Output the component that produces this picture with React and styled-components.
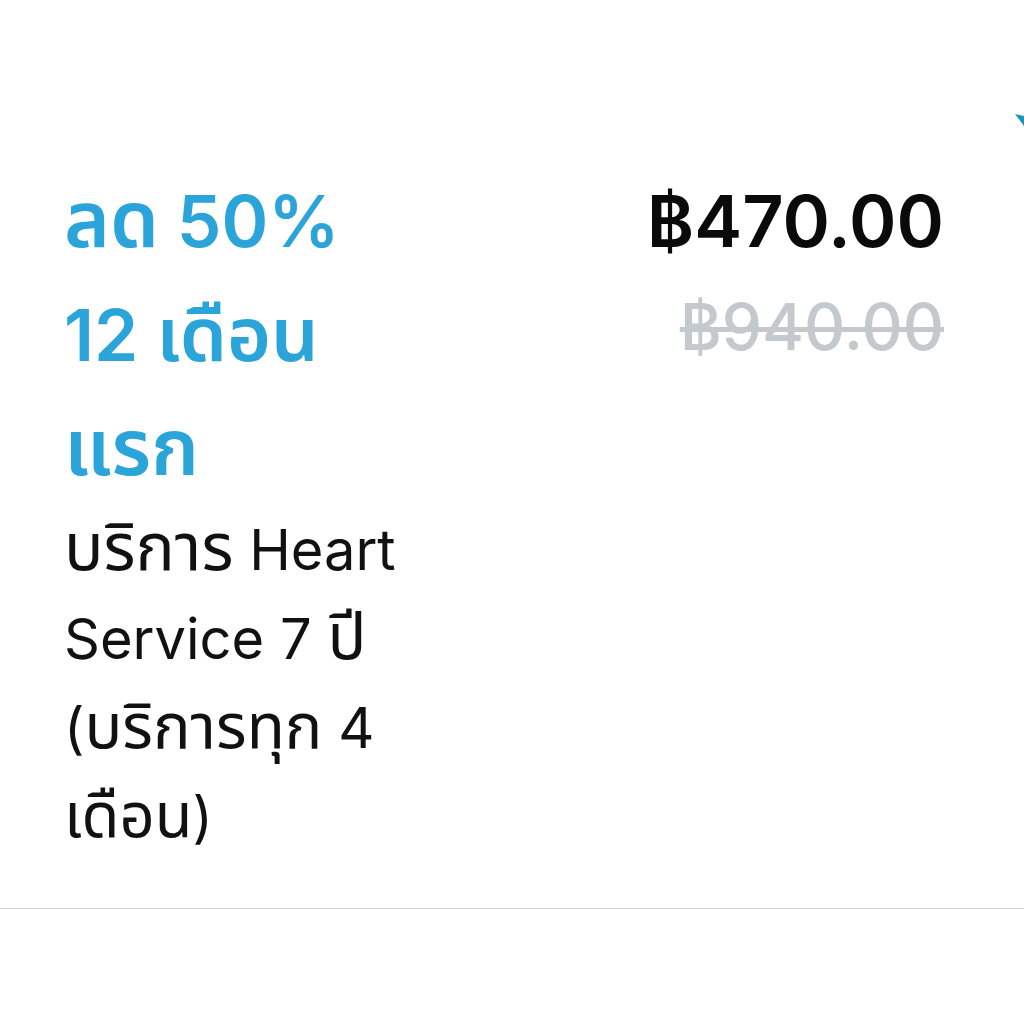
import styled, { createGlobalStyle } from "styled-components";

const GlobalStyle = createGlobalStyle`
  html, body {
    margin: 0;
    padding: 0;
    background: #ffffff;
  }
  body {
    font-family: "Inter", "Noto Sans Thai", "Noto Sans", sans-serif;
  }
`;

const Page = styled.div`
  position: relative;
  width: 1024px;
  height: 1024px;
  overflow: hidden;
  background: #fff;
`;

const Card = styled.div`
  display: flex;
  justify-content: space-between;
  align-items: flex-start;
  padding: 164px 80px 46px 64px;
  border-bottom: 1px solid #cfcfcf;
`;

const Info = styled.div`
  display: flex;
  flex-direction: column;
`;

const Title = styled.div`
  color: #2aa4d9;
  font-size: 71px;
  font-weight: 600;
  line-height: 114px;
  white-space: nowrap;
`;

const Desc = styled.div`
  color: #111;
  font-size: 56px;
  font-weight: 400;
  line-height: 89px;
  white-space: nowrap;
`;

/* the Thai fallback face draws smaller than the reference one */
const Th = styled.span`
  font-size: ${(p) => p.$scale || 1.1}em;
  line-height: 0;
`;

const Prices = styled.div`
  display: flex;
  flex-direction: column;
  align-items: flex-end;
`;

const Price = styled.div`
  color: ${(p) => (p.$old ? "#c3c9cd" : "#0a0a0a")};
  font-size: ${(p) => (p.$old ? "64px" : "72px")};
  font-weight: ${(p) => (p.$old ? 500 : 600)};
  line-height: ${(p) => (p.$old ? "100px" : "113px")};
  text-decoration: ${(p) => (p.$old ? "line-through" : "none")};
  text-decoration-thickness: 5px;
`;

const Corner = styled.svg`
  position: absolute;
  top: 112px;
  right: 0;
`;

export default function App() {
  return (
    <Page>
      <GlobalStyle />
      <Corner width="12" height="14" viewBox="0 0 12 14">
        <path d="M3 2 L12 4 L12 14 Z" fill="#1f94b8" />
      </Corner>
      <Card>
        <Info>
          <Title><Th>ลด</Th> 50%</Title>
          <Title>12 <Th $scale={1.06}>เดือน</Th></Title>
          <Title><Th>แรก</Th></Title>
          <Desc><Th $scale={1.17}>บริการ</Th> Heart</Desc>
          <Desc>Service 7 <Th $scale={1.15}>ปี</Th></Desc>
          <Desc>(<Th $scale={1.12}>บริการทุก</Th> 4</Desc>
          <Desc><Th $scale={1.1}>เดือน</Th>)</Desc>
        </Info>
        <Prices>
          <Price>฿470.00</Price>
          <Price $old>฿940.00</Price>
        </Prices>
      </Card>
    </Page>
  );
}
